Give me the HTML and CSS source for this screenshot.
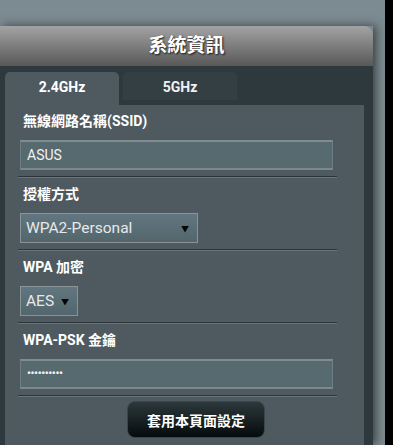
FILE: index.html
```html
<!DOCTYPE html>
<html lang="zh-Hant">
<head>
    <meta charset="UTF-8">
    <meta name="viewport" content="width=device-width, initial-scale=1.0">
    <title>系統資訊</title>
    <link rel="stylesheet" href="styles.css">
</head>
<body>
    <div class="page">
        <div class="main">
            <div class="panel">
                <div class="panel-head">系統資訊</div>
                <div class="panel-body">
                    <div class="tabs">
                        <div class="tab active">2.4GHz</div>
                        <div class="tab">5GHz</div>
                    </div>
                    <div class="content">
                        <div class="row">
                            <div class="label">無線網路名稱(SSID)</div>
                            <input class="field" type="text" value="ASUS">
                        </div>
                        <div class="row">
                            <div class="label">授權方式</div>
                            <div class="select wide">
                                <span>WPA2-Personal</span>
                                <span class="arrow">▼</span>
                            </div>
                        </div>
                        <div class="row">
                            <div class="label">WPA 加密</div>
                            <div class="select small">
                                <span>AES</span>
                                <span class="arrow">▼</span>
                            </div>
                        </div>
                        <div class="row">
                            <div class="label">WPA-PSK 金鑰</div>
                            <div class="field dots">••••••••••</div>
                        </div>
                        <div class="actions">
                            <button class="apply">套用本頁面設定</button>
                        </div>
                    </div>
                </div>
            </div>
        </div>
        <div class="edge"></div>
    </div>
</body>
</html>
```

FILE: styles.css
```css
body {
    margin: 0;
    padding: 0;
    font-family: Roboto, "Noto Sans CJK TC", sans-serif;
    color: white;
    background: #000;
    overflow: hidden;
}

.page {
    display: flex;
    height: 445px;
    overflow: hidden;
}

.main {
    width: 385px;
    background-color: #7c8b91;
    padding-top: 26px;
    box-sizing: border-box;
}

.edge {
    flex: 1;
    background: #000;
}

.panel {
    width: 373px;
    box-shadow: 3px 0 9px rgba(0,0,0,0.55);
}

.panel-head {
    height: 40px;
    line-height: 40px;
    text-align: center;
    font-size: 19px;
    font-weight: bold;
    background: linear-gradient(#a3a3a3, #585858);
    border-top-right-radius: 9px;
    text-shadow: 1px 1px 2px rgba(0,0,0,0.8);
}

.panel-body {
    background-color: #2e393e;
    padding: 6px 9px 0 5px;
    height: 379px;
    box-sizing: border-box;
}

.tabs {
    display: flex;
    gap: 4px;
    height: 33px;
}

.tab {
    width: 114px;
    height: 28px;
    line-height: 30px;
    text-align: center;
    font-size: 14px;
    font-weight: bold;
    background-color: #343f44;
    border-radius: 5px 5px 0 0;
    color: #f0f0f0;
}

.tab.active {
    height: 33px;
    background-color: #4e5a5f;
    color: white;
}

.content {
    background-color: #4e5a5f;
    padding-left: 13px;
    height: 340px;
}

.row {
    width: 319px;
    padding: 8px 0 6px 0;
    border-bottom: 1px solid #2b3439;
    box-shadow: 0 1px 0 #67757a;
    margin-bottom: 1px;
}

.label {
    height: 16px;
    line-height: 16px;
    padding-left: 5px;
    font-size: 14px;
    font-weight: bold;
    margin-bottom: 11px;
}

.field {
    display: block;
    box-sizing: border-box;
    margin-left: 2px;
    width: 313px;
    height: 30px;
    padding: 0 6px;
    background-color: #576a70;
    border: 1px solid #6f7e83;
    border-top: 2px solid #7f8d91;
    border-bottom: 2px solid #7b888c;
    color: #f2f2f2;
    font-family: Roboto, "Noto Sans CJK TC", sans-serif;
    font-size: 14px;
    outline: none;
}

.dots {
    line-height: 26px;
    font-size: 11px;
    letter-spacing: -0.4px;
    font-weight: bold;
}

.select {
    display: flex;
    align-items: center;
    justify-content: space-between;
    box-sizing: border-box;
    margin-left: 2px;
    height: 30px;
    padding: 0 8px 0 5px;
    background: linear-gradient(#617680, #53666c);
    border: 1px solid #8a9497;
    color: #e8e8e8;
    font-size: 15.5px;
}

.select.wide {
    width: 178px;
}

.select.small {
    width: 58px;
}

.arrow {
    color: #050505;
    font-size: 8px;
}

.actions {
    width: 319px;
    padding-top: 4px;
}

.apply {
    margin-left: 109px;
    width: 138px;
    height: 37px;
    border: 1px solid #3b464a;
    border-radius: 8px;
    background: linear-gradient(#2c383c, #060b0c);
    color: white;
    font-family: Roboto, "Noto Sans CJK TC", sans-serif;
    font-size: 14px;
    font-weight: bold;
    cursor: pointer;
}
```
